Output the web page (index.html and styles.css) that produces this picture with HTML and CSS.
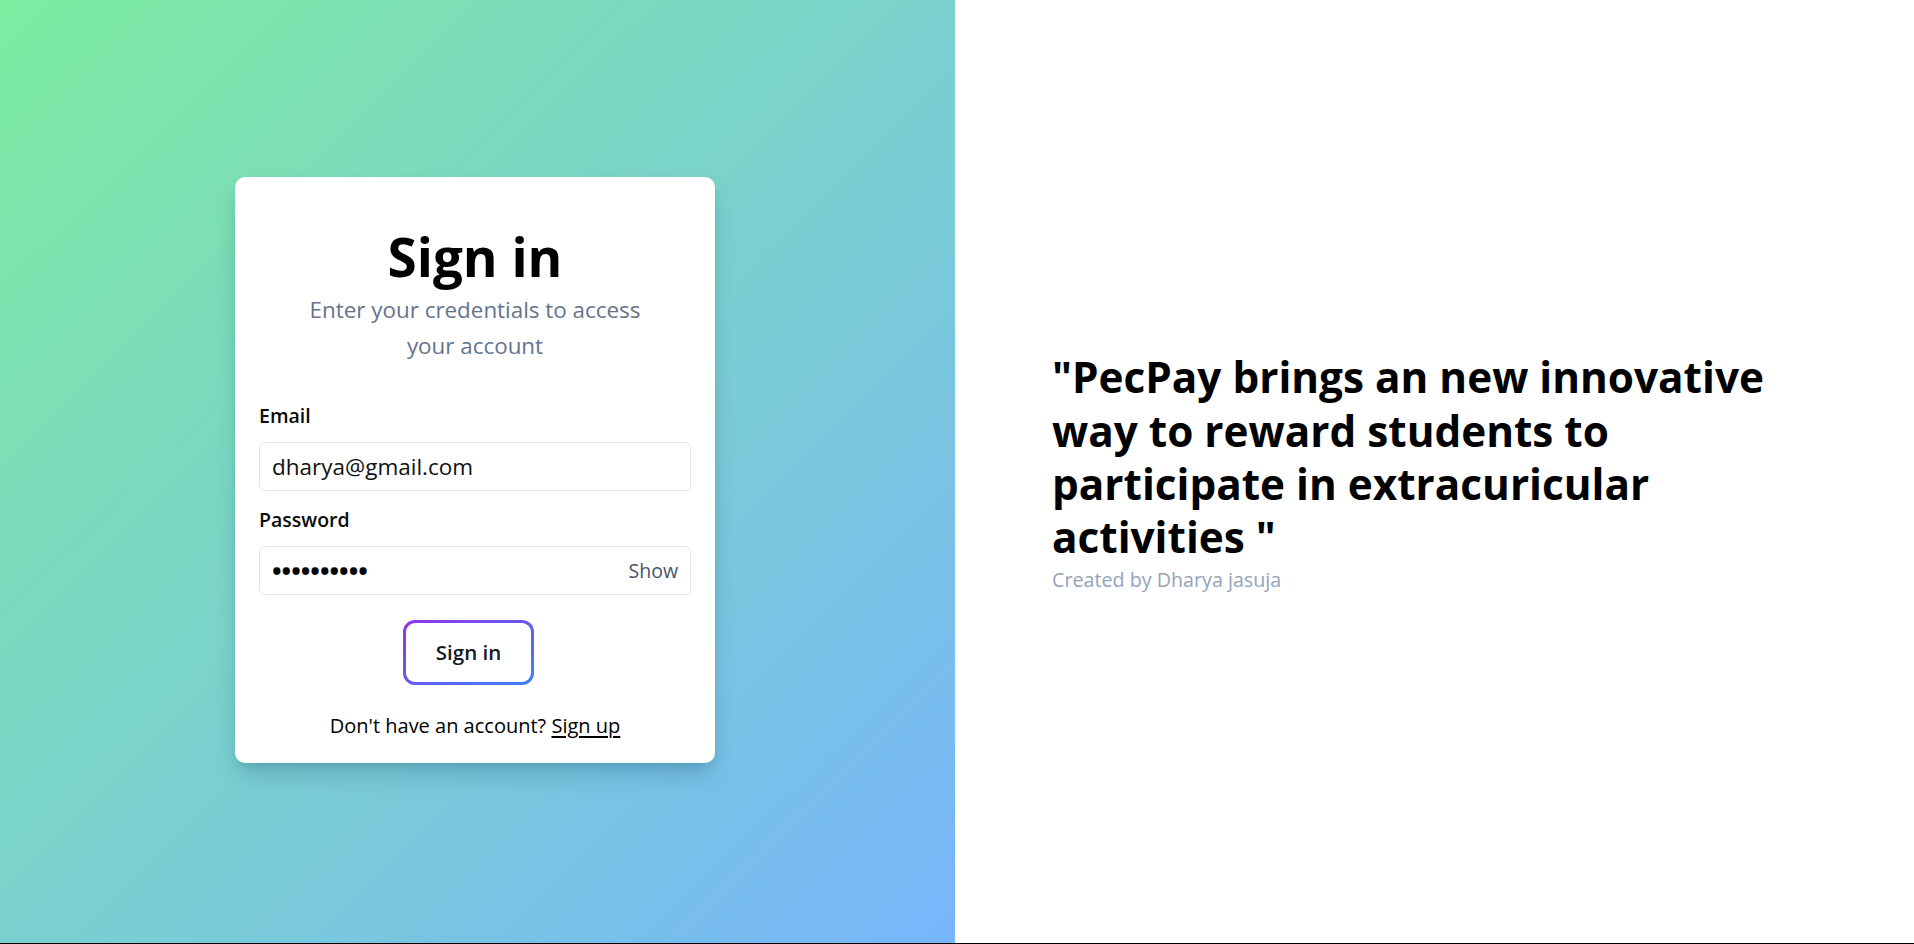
FILE: index.html
```html
<!DOCTYPE html>
<html lang="en">
<head>
<meta charset="utf-8">
<title>Sign in</title>
<link rel="stylesheet" href="styles.css">
</head>
<body>
<div class="page">
  <section class="left">
    <div class="card">
      <h1 class="title">Sign in</h1>
      <p class="subtitle">Enter your credentials to access your account</p>
      <div class="field field-email">
        <label class="label">Email</label>
        <div class="input"><span class="value">dharya@gmail.com</span></div>
      </div>
      <div class="field field-pw">
        <label class="label">Password</label>
        <div class="input">
          <span class="dots">••••••••••</span>
          <span class="show">Show</span>
        </div>
      </div>
      <div class="btn-row">
        <div class="btn"><span class="btn-inner">Sign in</span></div>
      </div>
      <p class="foot">Don't have an account? <a class="link">Sign up</a></p>
    </div>
  </section>
  <section class="right">
    <div class="quote">
      <h2 class="quote-text">"PecPay brings an new innovative way to reward students to participate in extracuricular activities "</h2>
      <p class="author">Created by Dharya jasuja</p>
    </div>
  </section>
</div>
</body>
</html>
```

FILE: styles.css
```css
* { box-sizing: border-box; }
html, body { margin: 0; padding: 0; }
body {
  font-family: "Open Sans", "Noto Sans", sans-serif;
  color: #000;
  background: #fff;
}
.page {
  display: flex;
  height: 944px;
  border-bottom: 1px solid #000;
}
.left {
  width: 955px;
  flex: none;
  background: linear-gradient(to bottom right, #7deca0, #77b5fb);
  display: flex;
  align-items: center;
  justify-content: center;
}
.card {
  width: 480px;
  margin: 0 5px 3px 0;
  background: #fff;
  border-radius: 10px;
  padding: 50px 24px 23.5px;
  box-shadow: 0 14px 24px -4px rgba(0, 60, 90, 0.22), 0 5px 10px -4px rgba(0, 60, 90, 0.16);
  display: flex;
  flex-direction: column;
}
.title {
  margin: 0;
  text-align: center;
  font-size: 53px;
  line-height: 60px;
  font-weight: 700;
}
.subtitle {
  margin: 5px auto 0;
  max-width: 360px;
  text-align: center;
  font-size: 22.4px;
  line-height: 36px;
  color: #64748b;
}
.field {
  display: flex;
  flex-direction: column;
}
.field-email { margin-top: 38.5px; }
.field-pw { margin-top: 16.5px; }
.label {
  font-size: 19.5px;
  line-height: 26px;
  font-weight: 600;
  margin-bottom: 13px;
  color: #0a0a0a;
}
.input {
  height: 49px;
  border: 1px solid #e2e8f0;
  border-radius: 5px;
  display: flex;
  align-items: center;
  padding: 0 12px;
  font-size: 22.5px;
}
.value { color: #111; }
.dots { font-size: 25.5px; line-height: 1; color: #000; font-weight: 700; }
.show {
  margin-left: auto;
  color: #475569;
  font-size: 19.5px;
}
.btn-row {
  display: flex;
  justify-content: center;
  margin-top: 24.5px;
}
.btn {
  width: 131px;
  height: 65px;
  margin-right: 13px;
  padding: 3px;
  border-radius: 12px;
  background: linear-gradient(to bottom right, #9333ea, #3b82f6);
  display: flex;
}
.btn-inner {
  flex: 1;
  background: #fff;
  border-radius: 9px;
  display: flex;
  align-items: center;
  justify-content: center;
  font-size: 20.5px;
  font-weight: 600;
  color: #111827;
}
.foot {
  margin: 27px 0 0;
  text-align: center;
  font-size: 20px;
  line-height: 28px;
}
.link {
  color: #000;
  text-decoration: underline;
  text-underline-offset: 3px;
}
.right {
  flex: 1;
  display: flex;
  align-items: center;
  padding-left: 97px;
}
.quote { width: 765px; }
.quote-text {
  margin: 0;
  font-size: 42.3px;
  line-height: 53.3px;
  font-weight: 700;
}
.author {
  margin: 3px 0 0;
  font-size: 19.7px;
  line-height: 26px;
  color: #94a3b8;
}
```
